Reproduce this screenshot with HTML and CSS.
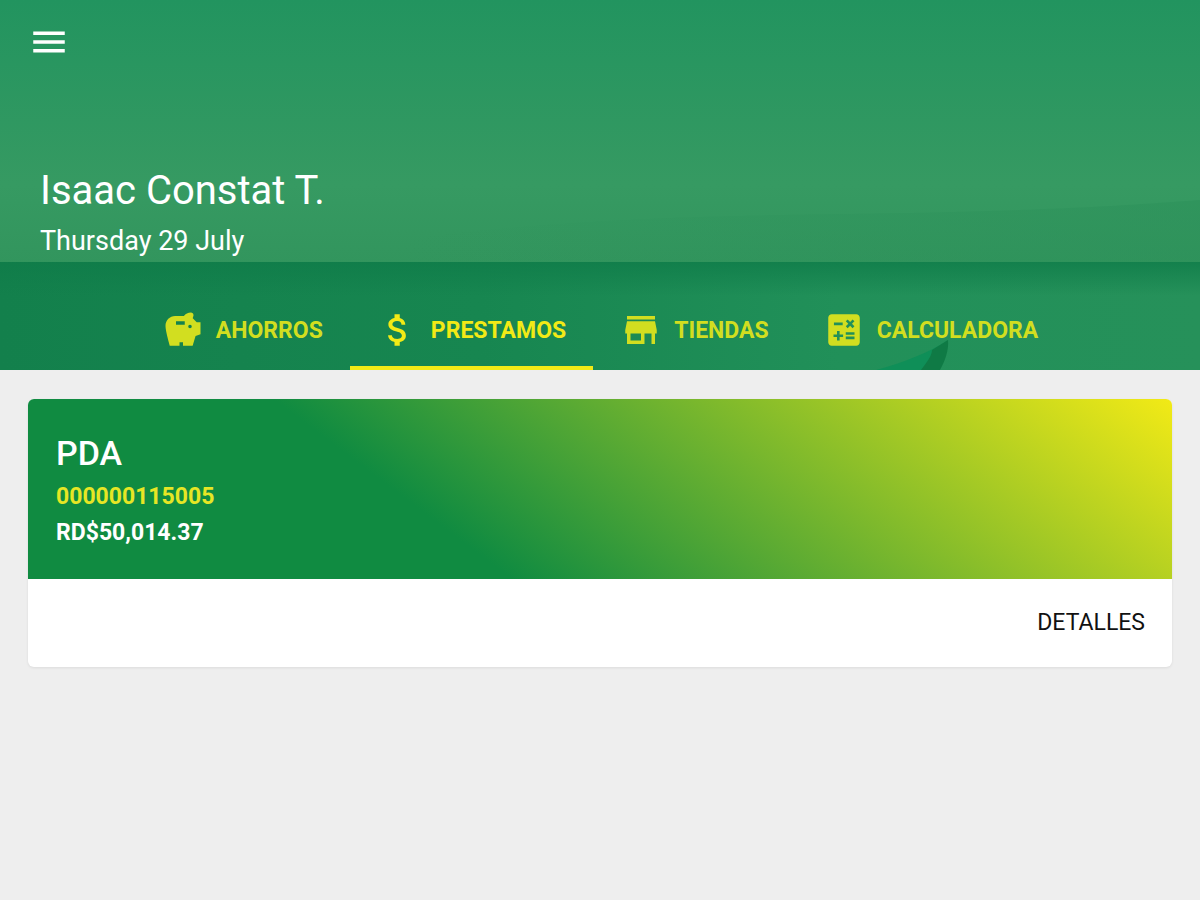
FILE: index.html
```html
<!DOCTYPE html>
<html lang="es">
<head>
  <meta charset="UTF-8" />
  <meta name="viewport" content="width=device-width, initial-scale=1.0" />
  <title>Prestamos</title>
  <link rel="stylesheet" href="styles.css">
</head>
<body>
  <header class="header">
    <svg class="scene" viewBox="0 0 1200 370" preserveAspectRatio="none" aria-hidden="true">
      <defs>
        <linearGradient id="sky" x1="0" y1="0" x2="0" y2="1">
          <stop offset="0" stop-color="#22945f" />
          <stop offset="0.7" stop-color="#369a62" />
          <stop offset="1" stop-color="#32955d" />
        </linearGradient>
        <linearGradient id="sea" x1="0" y1="0" x2="1" y2="0">
          <stop offset="0" stop-color="#13804c" />
          <stop offset="0.4" stop-color="#178650" />
          <stop offset="0.7" stop-color="#219059" />
          <stop offset="1" stop-color="#26915a" />
        </linearGradient>
        <linearGradient id="horizon" x1="0" y1="0" x2="0" y2="1">
          <stop offset="0" stop-color="#0f7c49" stop-opacity="0.8" />
          <stop offset="1" stop-color="#0f7c49" stop-opacity="0" />
        </linearGradient>
        <linearGradient id="hill" x1="0" y1="0" x2="1" y2="0">
          <stop offset="0" stop-color="#2b9059" stop-opacity="0" />
          <stop offset="1" stop-color="#2b9059" stop-opacity="0.5" />
        </linearGradient>
      </defs>
      <rect width="1200" height="264" fill="url(#sky)" />
      <path d="M400 240 C600 212 800 216 950 212 S1140 204 1200 200 V263 H400 Z" fill="url(#hill)" />
      <rect y="262" width="1200" height="108" fill="url(#sea)" />
      <rect y="262" width="1200" height="34" fill="url(#horizon)" />
      <!-- boat -->
      <path d="M876 370 C905 362 930 352 948 340 L930 370 Z" fill="#0f8f58" />
      <path d="M921 370 C928 361 932 355 932 350 L948 340 C949 350 945 361 940 370 Z" fill="#0f7a45" />
    </svg>

    <button class="menu" type="button" aria-label="Menu">
      <svg class="icon" viewBox="0 0 24 24"><path d="M3 6H21V8H3V6M3 11H21V13H3V11M3 16H21V18H3V16Z" /></svg>
    </button>

    <div class="user">
      <h1>Isaac Constat T.</h1>
      <p>Thursday 29 July</p>
    </div>

    <nav class="tabs" role="tablist">
      <button class="tab" type="button" role="tab" aria-selected="false">
        <svg class="icon" viewBox="0 0 24 24"><path fill-rule="evenodd" d="M19.83 7.5L17.56 5.23C17.63 4.81 17.74 4.42 17.88 4.08C17.96 3.9 18 3.71 18 3.5C18 2.67 17.33 2 16.5 2C14.86 2 13.41 2.79 12.5 4H7.5C4.46 4 2 6.46 2 9.5S4.5 21 4.5 21H10V19H12V21H17.5L19.18 15.41L22 14.47V7.5H19.83M13 9H8V7H13V9M16 11C15.45 11 15 10.55 15 10S15.45 9 16 9C16.55 9 17 9.45 17 10S16.55 11 16 11Z" /></svg>
        AHORROS
      </button>
      <button class="tab active" type="button" role="tab" aria-selected="true">
        <svg class="icon" viewBox="0 0 24 24"><path d="M11.8 10.9C9.53 10.31 8.8 9.7 8.8 8.75C8.8 7.66 9.81 6.9 11.5 6.9C13.28 6.9 13.94 7.75 14 9H16.21C16.14 7.28 15.09 5.7 13 5.19V3H10V5.16C8.06 5.58 6.5 6.84 6.5 8.77C6.5 11.08 8.41 12.23 11.2 12.9C13.7 13.5 14.2 14.38 14.2 15.31C14.2 16 13.71 17.1 11.5 17.1C9.44 17.1 8.63 16.18 8.52 15H6.32C6.44 17.19 8.08 18.42 10 18.83V21H13V18.85C14.95 18.48 16.5 17.35 16.5 15.3C16.5 12.46 14.07 11.49 11.8 10.9Z" /></svg>
        PRESTAMOS
      </button>
      <button class="tab" type="button" role="tab" aria-selected="false">
        <svg class="icon" viewBox="0 0 24 24"><path d="M12 18H6V14H12M21 14V12L20 7H4L3 12V14H4V20H14V14H18V20H20V14M20 4H4V6H20V4Z" /></svg>
        TIENDAS
      </button>
      <button class="tab" type="button" role="tab" aria-selected="false">
        <svg class="icon" viewBox="0 0 24 24"><path fill-rule="evenodd" d="M19 3H5C3.9 3 3 3.9 3 5V19C3 20.1 3.9 21 5 21H19C20.1 21 21 20.1 21 19V5C21 3.9 20.1 3 19 3M13.03 7.06L14.09 6L15.5 7.41L16.91 6L17.97 7.06L16.56 8.47L17.97 9.88L16.91 10.94L15.5 9.54L14.09 10.95L13.03 9.89L14.44 8.48L13.03 7.06M6.25 7.72H11.25V9.22H6.25V7.72M11.5 16H9.5V18H8V16H6V14.5H8V12.5H9.5V14.5H11.5V16M18 17.25H13V15.75H18V17.25M18 14.75H13V13.25H18V14.75Z" /></svg>
        CALCULADORA
      </button>
    </nav>
  </header>

  <main class="content">
    <article class="card">
      <div class="card-top">
        <h2>PDA</h2>
        <p class="account">000000115005</p>
        <p class="amount">RD$50,014.37</p>
      </div>
      <div class="card-actions">
        <button class="details" type="button">DETALLES</button>
      </div>
    </article>
  </main>
</body>
</html>
```
FILE: styles.css
```css
:root {
  --bg: #eeeeee;
  --green: #108b41;
  --yellow: #f2ea16;
  --lime: #d2de20;
}
* {
  box-sizing: border-box;
}
body {
  margin: 0;
  min-height: 100vh;
  background: var(--bg);
  font-family: Roboto, sans-serif;
}
h1, h2, p {
  margin: 0;
}
button {
  border: none;
  background: none;
  font-family: inherit;
  cursor: pointer;
}
.icon {
  width: 42px;
  height: 42px;
  flex: none;
  fill: currentColor;
}

/* header */
.header {
  position: relative;
  background: #22945f;
  color: #fff;
}
.scene {
  position: absolute;
  inset: 0;
  width: 100%;
  height: 100%;
}
.menu, .user, .tabs {
  position: relative;
}
.menu {
  display: flex;
  padding: 21px 28px;
  color: #fff;
}
.user {
  padding: 83px 40px 31px;
}
.user h1 {
  font-size: 40px;
  font-weight: 400;
  line-height: 48px;
}
.user p {
  margin-top: 10px;
  font-size: 27px;
  line-height: 32px;
}

/* tabs */
.tabs {
  display: flex;
  justify-content: center;
}
.tab {
  display: flex;
  align-items: center;
  gap: 12px;
  height: 82px;
  padding: 6px 27px 0;
  border-bottom: 4px solid transparent;
  color: var(--lime);
  font-size: 23px;
  font-weight: 700;
}
.tab.active {
  color: var(--yellow);
  border-bottom-color: var(--yellow);
}

/* loan card */
.content {
  padding: 29px 28px;
}
.card {
  overflow: hidden;
  border-radius: 6px;
  background: #fff;
  box-shadow: 0 1px 3px rgba(0, 0, 0, 0.08);
}
.card-top {
  padding: 34px 28px 28px;
  background: linear-gradient(37deg, var(--green) 35%, var(--yellow) 100%);
  color: #fff;
}
.card-top h2 {
  margin-bottom: 6px;
  font-size: 34px;
  font-weight: 500;
  line-height: 40px;
}
.card-top p {
  font-size: 23px;
  font-weight: 700;
  line-height: 36px;
}
.card-top .account {
  color: #e6e625;
}
.card-actions {
  display: flex;
  justify-content: flex-end;
  padding: 24px 27px;
}
.details {
  padding: 0;
  color: #111;
  font-size: 23px;
  line-height: 40px;
}
```
